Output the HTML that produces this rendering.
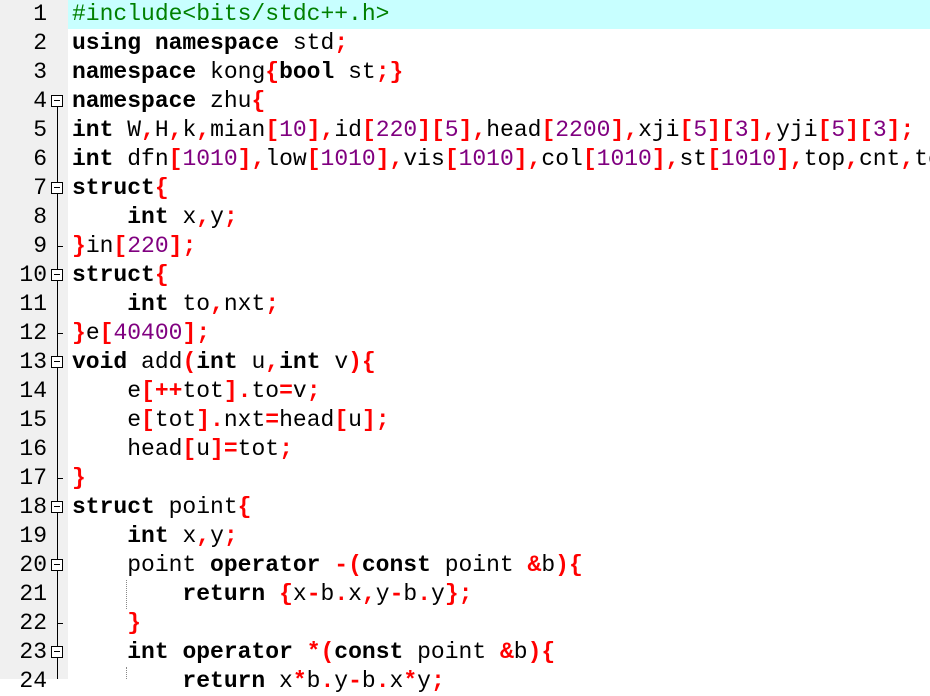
<!DOCTYPE html>
<html><head><meta charset="utf-8"><style>
html,body{margin:0;padding:0;width:930px;height:679px;overflow:hidden;background:#fff;}
.g{position:absolute;left:0;top:0;width:68px;height:679px;background:#f0f0f0;}
.hl{position:absolute;left:68px;top:0;width:862px;height:29px;background:#c8ffff;}
.num{position:absolute;left:0;width:47px;text-align:right;font:23px "Liberation Mono",monospace;line-height:29px;color:#000;}
pre{position:absolute;left:72px;top:0;margin:0;font:23px "Liberation Mono",monospace;line-height:29px;color:#000;white-space:pre;}
.k{font-weight:bold;}
.o{font-weight:bold;color:#ff0000;}
.n{color:#800080;}
.p{color:#008000;}
.vl{position:absolute;left:57px;width:1px;background:#000;}
.box{position:absolute;left:51px;width:10px;height:10px;border:1px solid #000;background:#fff;}
.box:after{content:"";position:absolute;left:2px;top:4px;width:6px;height:1px;background:#000;}
.tick{position:absolute;left:57px;width:6px;height:1px;background:#000;}
.ig{position:absolute;left:126px;width:0;border-left:1px dotted #888;}
</style></head><body>
<div class="g"></div>
<div class="hl"></div>
<div class="num" style="top:0">1</div>
<div class="num" style="top:29px">2</div>
<div class="num" style="top:58px">3</div>
<div class="num" style="top:87px">4</div>
<div class="num" style="top:116px">5</div>
<div class="num" style="top:145px">6</div>
<div class="num" style="top:174px">7</div>
<div class="num" style="top:203px">8</div>
<div class="num" style="top:232px">9</div>
<div class="num" style="top:261px">10</div>
<div class="num" style="top:290px">11</div>
<div class="num" style="top:319px">12</div>
<div class="num" style="top:348px">13</div>
<div class="num" style="top:377px">14</div>
<div class="num" style="top:406px">15</div>
<div class="num" style="top:435px">16</div>
<div class="num" style="top:464px">17</div>
<div class="num" style="top:493px">18</div>
<div class="num" style="top:522px">19</div>
<div class="num" style="top:551px">20</div>
<div class="num" style="top:580px">21</div>
<div class="num" style="top:609px">22</div>
<div class="num" style="top:638px">23</div>
<div class="num" style="top:667px">24</div>
<div class="vl" style="top:107px;height:572px"></div>
<div class="box" style="top:95px"></div>
<div class="box" style="top:182px"></div>
<div class="tick" style="top:246px"></div>
<div class="box" style="top:269px"></div>
<div class="tick" style="top:333px"></div>
<div class="box" style="top:356px"></div>
<div class="tick" style="top:478px"></div>
<div class="box" style="top:501px"></div>
<div class="box" style="top:559px"></div>
<div class="tick" style="top:623px"></div>
<div class="box" style="top:646px"></div>
<div class="ig" style="top:580px;height:29px"></div>
<div class="ig" style="top:667px;height:12px"></div>
<pre><span class="p">#include&lt;bits/stdc++.h&gt;</span>
<span class="k">using namespace</span> std<span class="o">;</span>
<span class="k">namespace</span> kong<span class="o">{</span><span class="k">bool</span> st<span class="o">;}</span>
<span class="k">namespace</span> zhu<span class="o">{</span>
<span class="k">int</span> W<span class="o">,</span>H<span class="o">,</span>k<span class="o">,</span>mian<span class="o">[</span><span class="n">10</span><span class="o">],</span>id<span class="o">[</span><span class="n">220</span><span class="o">][</span><span class="n">5</span><span class="o">],</span>head<span class="o">[</span><span class="n">2200</span><span class="o">],</span>xji<span class="o">[</span><span class="n">5</span><span class="o">][</span><span class="n">3</span><span class="o">],</span>yji<span class="o">[</span><span class="n">5</span><span class="o">][</span><span class="n">3</span><span class="o">];</span>
<span class="k">int</span> dfn<span class="o">[</span><span class="n">1010</span><span class="o">],</span>low<span class="o">[</span><span class="n">1010</span><span class="o">],</span>vis<span class="o">[</span><span class="n">1010</span><span class="o">],</span>col<span class="o">[</span><span class="n">1010</span><span class="o">],</span>st<span class="o">[</span><span class="n">1010</span><span class="o">],</span>top<span class="o">,</span>cnt<span class="o">,</span>tot<span class="o">;</span>
<span class="k">struct</span><span class="o">{</span>
    <span class="k">int</span> x<span class="o">,</span>y<span class="o">;</span>
<span class="o">}</span>in<span class="o">[</span><span class="n">220</span><span class="o">];</span>
<span class="k">struct</span><span class="o">{</span>
    <span class="k">int</span> to<span class="o">,</span>nxt<span class="o">;</span>
<span class="o">}</span>e<span class="o">[</span><span class="n">40400</span><span class="o">];</span>
<span class="k">void</span> add<span class="o">(</span><span class="k">int</span> u<span class="o">,</span><span class="k">int</span> v<span class="o">){</span>
    e<span class="o">[++</span>tot<span class="o">].</span>to<span class="o">=</span>v<span class="o">;</span>
    e<span class="o">[</span>tot<span class="o">].</span>nxt<span class="o">=</span>head<span class="o">[</span>u<span class="o">];</span>
    head<span class="o">[</span>u<span class="o">]=</span>tot<span class="o">;</span>
<span class="o">}</span>
<span class="k">struct</span> point<span class="o">{</span>
    <span class="k">int</span> x<span class="o">,</span>y<span class="o">;</span>
    point <span class="k">operator</span> <span class="o">-(</span><span class="k">const</span> point <span class="o">&amp;</span>b<span class="o">){</span>
        <span class="k">return</span> <span class="o">{</span>x<span class="o">-</span>b<span class="o">.</span>x<span class="o">,</span>y<span class="o">-</span>b<span class="o">.</span>y<span class="o">};</span>
    <span class="o">}</span>
    <span class="k">int</span> <span class="k">operator</span> <span class="o">*(</span><span class="k">const</span> point <span class="o">&amp;</span>b<span class="o">){</span>
        <span class="k">return</span> x<span class="o">*</span>b<span class="o">.</span>y<span class="o">-</span>b<span class="o">.</span>x<span class="o">*</span>y<span class="o">;</span></pre>
</body></html>
